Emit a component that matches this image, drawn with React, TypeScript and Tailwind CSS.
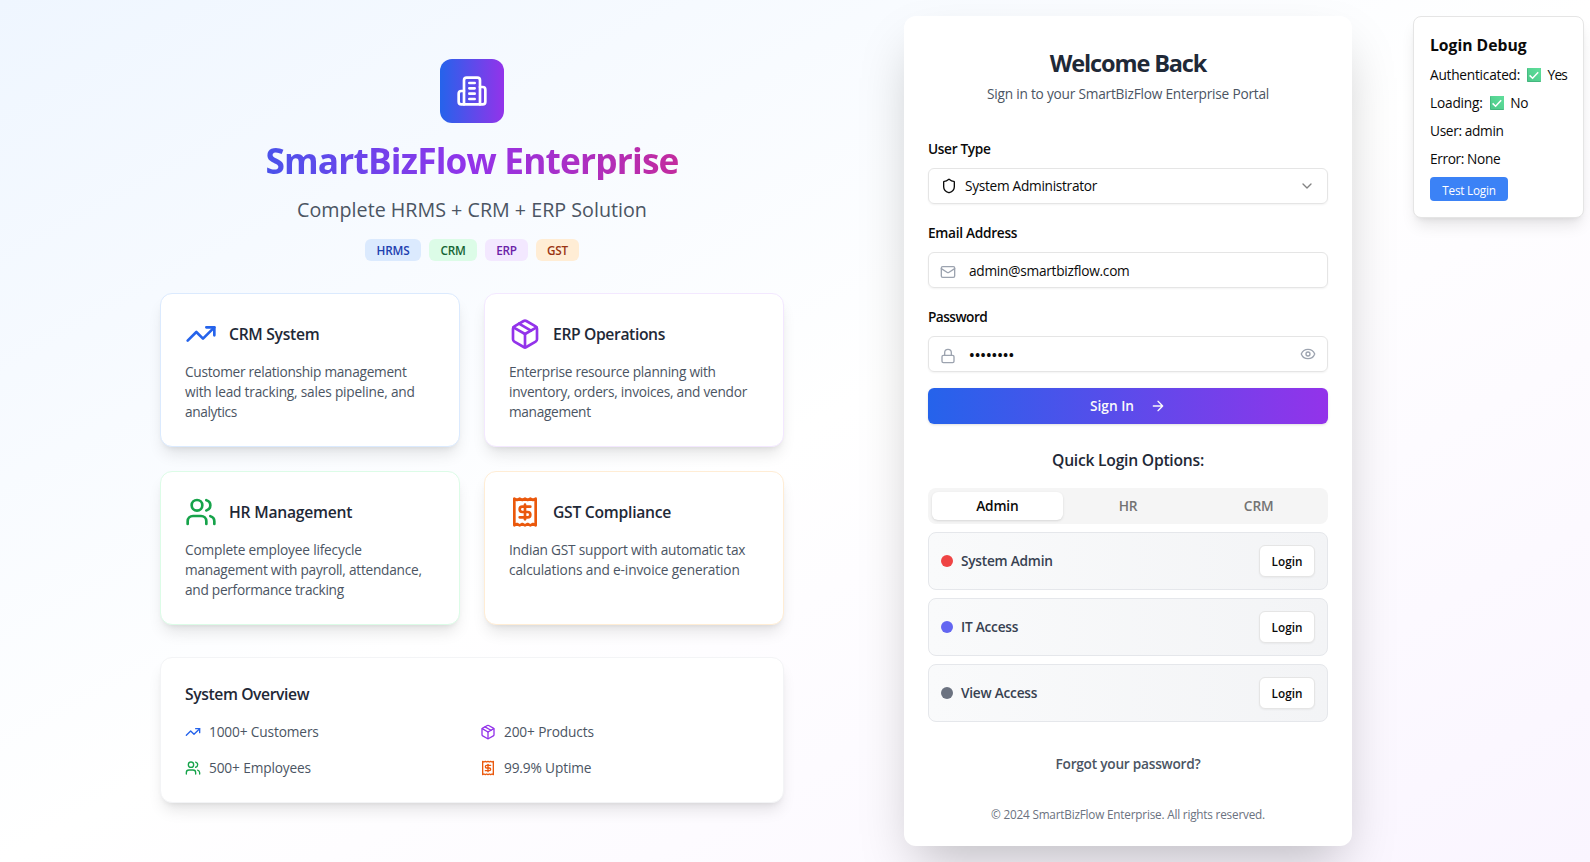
import type { ReactNode } from "react";

type IconProps = { className?: string };

function Icon({ className = "", children }: { className?: string; children: ReactNode }) {
  return (
    <svg
      viewBox="0 0 24 24"
      fill="none"
      stroke="currentColor"
      strokeWidth="2"
      strokeLinecap="round"
      strokeLinejoin="round"
      className={`shrink-0 ${className}`}
    >
      {children}
    </svg>
  );
}

const Building = ({ className }: IconProps) => (
  <Icon className={className}>
    <path d="M6 22V4a2 2 0 0 1 2-2h8a2 2 0 0 1 2 2v18Z" />
    <path d="M6 12H4a2 2 0 0 0-2 2v6a2 2 0 0 0 2 2h2" />
    <path d="M18 9h2a2 2 0 0 1 2 2v9a2 2 0 0 1-2 2h-2" />
    <path d="M10 6h4M10 10h4M10 14h4M10 18h4" />
  </Icon>
);

const Trending = ({ className }: IconProps) => (
  <Icon className={className}>
    <path d="m22 7-8.5 8.5-5-5L2 17" />
    <path d="M16 7h6v6" />
  </Icon>
);

const Package = ({ className }: IconProps) => (
  <Icon className={className}>
    <path d="m7.5 4.27 9 5.15" />
    <path d="M21 8a2 2 0 0 0-1-1.73l-7-4a2 2 0 0 0-2 0l-7 4A2 2 0 0 0 3 8v8a2 2 0 0 0 1 1.73l7 4a2 2 0 0 0 2 0l7-4A2 2 0 0 0 21 16Z" />
    <path d="m3.3 7 8.7 5 8.7-5" />
    <path d="M12 22V12" />
  </Icon>
);

const Users = ({ className }: IconProps) => (
  <Icon className={className}>
    <path d="M16 21v-2a4 4 0 0 0-4-4H6a4 4 0 0 0-4 4v2" />
    <circle cx="9" cy="7" r="4" />
    <path d="M22 21v-2a4 4 0 0 0-3-3.87" />
    <path d="M16 3.13a4 4 0 0 1 0 7.75" />
  </Icon>
);

const Receipt = ({ className }: IconProps) => (
  <Icon className={className}>
    <path d="M4 2v20l2-1 2 1 2-1 2 1 2-1 2 1 2-1 2 1V2l-2 1-2-1-2 1-2-1-2 1-2-1-2 1Z" />
    <path d="M16 8h-6a2 2 0 1 0 0 4h4a2 2 0 1 1 0 4H8" />
    <path d="M12 17.5v-11" />
  </Icon>
);

const Shield = ({ className }: IconProps) => (
  <Icon className={className}>
    <path d="M20 13c0 5-3.5 7.5-7.66 8.95a1 1 0 0 1-.67-.01C7.5 20.5 4 18 4 13V6a1 1 0 0 1 1-1c2 0 4.5-1.2 6.24-2.72a1.17 1.17 0 0 1 1.52 0C14.51 3.81 17 5 19 5a1 1 0 0 1 1 1z" />
  </Icon>
);

const Mail = ({ className }: IconProps) => (
  <Icon className={className}>
    <rect width="20" height="16" x="2" y="4" rx="2" />
    <path d="m22 7-8.97 5.7a1.94 1.94 0 0 1-2.06 0L2 7" />
  </Icon>
);

const Lock = ({ className }: IconProps) => (
  <Icon className={className}>
    <rect width="18" height="11" x="3" y="11" rx="2" />
    <path d="M7 11V7a5 5 0 0 1 10 0v4" />
  </Icon>
);

const Eye = ({ className }: IconProps) => (
  <Icon className={className}>
    <path d="M2.062 12.348a1 1 0 0 1 0-.696 10.75 10.75 0 0 1 19.876 0 1 1 0 0 1 0 .696 10.75 10.75 0 0 1-19.876 0" />
    <circle cx="12" cy="12" r="3" />
  </Icon>
);

const ChevronDown = ({ className }: IconProps) => (
  <Icon className={className}>
    <path d="m6 9 6 6 6-6" />
  </Icon>
);

const ArrowRight = ({ className }: IconProps) => (
  <Icon className={className}>
    <path d="M5 12h14M12 5l7 7-7 7" />
  </Icon>
);

const CheckBadge = () => (
  <svg viewBox="0 0 14 14" className="mr-[6.5px] ml-[7px] inline-block size-[14px] align-[-2px]" role="img" aria-label="check">
    <defs>
      <linearGradient id="checkFill" x1="1" y1="0" x2="0" y2="1">
        <stop offset="0" stopColor="#5fdf9b" />
        <stop offset="1" stopColor="#4dc98a" />
      </linearGradient>
    </defs>
    <rect width="14" height="14" rx="0.8" fill="#3fae79" />
    <rect x="0.6" width="13.4" height="13.2" rx="0.6" fill="url(#checkFill)" />
    <path d="m2.6 7.4 3 2.9 5.6-6" fill="none" stroke="#fff" strokeWidth="1.5" />
  </svg>
);

const badges = [
  { label: "HRMS", className: "w-14 bg-[#dbeafe] text-[#1e40af]" },
  { label: "CRM", className: "w-12 bg-[#dcfce7] text-[#166534]" },
  { label: "ERP", className: "w-[43px] bg-[#f3e8ff] text-[#6b21a8]" },
  { label: "GST", className: "w-[43px] bg-[#ffedd5] text-[#9a3412]" },
];

const features = [
  {
    title: "CRM System",
    titleClass: "tracking-[-0.3px]",
    icon: <Trending className="size-8 text-[#2563eb]" />,
    border: "border-[#dbeafe]",
    lines: [
      { text: "Customer relationship management", className: "tracking-[-0.29px]" },
      { text: "with lead tracking, sales pipeline, and", className: "tracking-[-0.2px]" },
      { text: "analytics", className: "tracking-[-0.38px]" },
    ],
  },
  {
    title: "ERP Operations",
    titleClass: "tracking-[-0.38px]",
    icon: <Package className="size-8 text-[#9333ea]" />,
    border: "border-[#f3e8ff]",
    lines: [
      { text: "Enterprise resource planning with", className: "tracking-[-0.27px]" },
      { text: "inventory, orders, invoices, and vendor", className: "tracking-[-0.25px]" },
      { text: "management", className: "tracking-[-0.33px]" },
    ],
  },
  {
    title: "HR Management",
    titleClass: "tracking-[-0.24px]",
    icon: <Users className="size-8 text-[#16a34a]" />,
    border: "border-[#dcfce7]",
    lines: [
      { text: "Complete employee lifecycle", className: "tracking-[-0.18px]" },
      { text: "management with payroll, attendance,", className: "tracking-[-0.25px]" },
      { text: "and performance tracking", className: "tracking-[-0.28px]" },
    ],
  },
  {
    title: "GST Compliance",
    titleClass: "tracking-[-0.27px]",
    icon: <Receipt className="size-8 text-[#ea580c]" />,
    border: "border-[#ffedd5]",
    lines: [
      { text: "Indian GST support with automatic tax", className: "tracking-[-0.22px]" },
      { text: "calculations and e-invoice generation", className: "tracking-[-0.15px]" },
    ],
  },
];

const stats = [
  { label: "1000+ Customers", icon: <Trending className="size-4 text-[#2563eb]" /> },
  { label: "200+ Products", icon: <Package className="size-4 text-[#9333ea]" /> },
  { label: "500+ Employees", icon: <Users className="size-4 text-[#16a34a]" /> },
  { label: "99.9% Uptime", icon: <Receipt className="size-4 text-[#ea580c]" /> },
];

const quickLogins = [
  { label: "System Admin", dot: "bg-[#ef4444]" },
  { label: "IT Access", dot: "bg-[#6366f1]" },
  { label: "View Access", dot: "bg-[#6b7280]" },
];

function Intro() {
  return (
    <section>
      <div className="flex flex-col items-center">
        <div className="flex size-16 items-center justify-center rounded-xl bg-linear-to-r/srgb from-[#2563eb] to-[#9333ea]">
          <Building className="size-8 text-white" />
        </div>
        <h1 className="mt-[17px] w-full bg-linear-to-r/srgb from-[#2563eb] via-[#9333ea] to-[#db2777] bg-clip-text text-center text-[35.3px] leading-10 font-bold tracking-[-0.84px] whitespace-nowrap text-transparent">
          SmartBizFlow Enterprise
        </h1>
        <p className="mt-4 text-[19.7px] leading-7 text-[#4b5563]">Complete HRMS + CRM + ERP Solution</p>
        <div className="mt-[15px] flex gap-2">
          {badges.map((b) => (
            <span
              key={b.label}
              className={`flex h-[22px] items-center justify-center rounded-md pt-px text-[11.75px] font-semibold tracking-[-0.2px] ${b.className}`}
            >
              {b.label}
            </span>
          ))}
        </div>
      </div>

      <div className="mt-8 grid grid-cols-2 gap-6">
        {features.map((f) => (
          <article key={f.title} className={`h-[154px] rounded-xl border bg-white p-6 shadow-lg ${f.border}`}>
            <div className="flex items-center gap-3">
              {f.icon}
              <h3 className={`text-[15.7px] leading-6 font-semibold text-[#1f2937] ${f.titleClass}`}>{f.title}</h3>
            </div>
            <p className="mt-3 text-[13.7px] leading-5 whitespace-nowrap text-[#4b5563]">
              {f.lines.map((line) => (
                <span key={line.text} className={`block ${line.className}`}>
                  {line.text}
                </span>
              ))}
            </p>
          </article>
        ))}
      </div>

      <div className="mt-8 rounded-xl border border-[#f3f4f6] bg-white p-6 shadow-lg">
        <h3 className="text-[15.7px] leading-6 font-semibold tracking-[-0.4px] text-[#1f2937]">System Overview</h3>
        <div className="mt-4 grid grid-cols-2 gap-4 text-[13.7px] leading-5 tracking-[-0.14px] text-[#4b5563]">
          {stats.map((s) => (
            <div key={s.label} className="flex items-center gap-2">
              {s.icon}
              <span>{s.label}</span>
            </div>
          ))}
        </div>
      </div>
    </section>
  );
}

function LoginCard() {
  return (
    <section className="w-[448px] justify-self-center rounded-xl bg-white px-6 pt-[31px] pb-6 shadow-2xl">
      <header className="text-center">
        <h2 className="text-[23.5px] leading-8 font-bold tracking-[-1.13px] text-[#1f2937]">Welcome Back</h2>
        <p className="mt-[5px] text-[13.7px] leading-5 tracking-[-0.22px] text-[#4b5563]">
          Sign in to your SmartBizFlow Enterprise Portal
        </p>
      </header>

      <div className="mt-[35px] flex flex-col gap-[18px] text-[13.7px] leading-5 text-[#0a0a0a]">
        <div>
          <div className="font-semibold tracking-[-0.36px]">User Type</div>
          <div className="mt-[9px] flex h-9 items-center rounded-md border border-[#e5e5e5] px-3 shadow-xs">
            <Shield className="size-4" />
            <span className="ml-2 flex-1 tracking-[-0.3px]">System Administrator</span>
            <ChevronDown className="size-4 opacity-50" />
          </div>
        </div>
        <div className="pt-px">
          <div className="font-semibold tracking-[-0.3px]">Email Address</div>
          <div className="mt-[9px] flex h-9 items-center rounded-md border border-[#e5e5e5] px-[11px] shadow-xs">
            <Mail className="mt-1 size-4 text-[#9ca3af]" />
            <span className="ml-[13px] flex-1 pt-0.5 tracking-[-0.26px]">admin@smartbizflow.com</span>
          </div>
        </div>
        <div className="pt-px">
          <div className="font-semibold tracking-[-0.55px]">Password</div>
          <div className="mt-[9px] flex h-9 items-center rounded-md border border-[#e5e5e5] px-[11px] shadow-xs">
            <Lock className="mt-1 size-4 text-[#9ca3af]" />
            <span className="ml-[13px] flex-1 text-[15px] font-semibold">••••••••</span>
            <Eye className="size-4 text-[#9ca3af]" />
          </div>
        </div>
      </div>

      <button className="mt-4 flex h-9 w-full items-center justify-center gap-4 rounded-md bg-linear-to-r/srgb from-[#2563eb] to-[#9333ea] text-[13.7px] font-semibold text-[#fafafa] shadow-sm">
        <span>Sign In</span>
        <ArrowRight className="size-4" />
      </button>

      <h3 className="mt-6 text-center text-[15.7px] leading-6 font-semibold tracking-[-0.25px] text-[#1f2937]">
        Quick Login Options:
      </h3>

      <div className="mt-4 grid h-9 grid-cols-3 rounded-lg bg-[#f5f5f5] p-1 text-[13.7px] font-semibold tracking-[-0.15px] text-[#737373]">
        <div className="flex items-center justify-center rounded-md bg-white text-[#0a0a0a] shadow-sm">Admin</div>
        <div className="flex items-center justify-center">HR</div>
        <div className="flex items-center justify-center">CRM</div>
      </div>

      <div className="mt-2 flex flex-col gap-2">
        {quickLogins.map((q) => (
          <div
            key={q.label}
            className="flex h-[58px] items-center rounded-lg border border-[#e5e7eb] bg-linear-to-r/srgb from-[#f9fafb] to-[#f3f4f6] px-3"
          >
            <span className={`size-3 rounded-full ${q.dot}`} />
            <span className="ml-2 flex-1 text-[13.7px] font-semibold tracking-[-0.24px] text-[#374151]">{q.label}</span>
            <button className="h-8 w-14 rounded-md border border-[#e5e5e5] bg-white pt-0.5 text-[11.75px] font-semibold text-[#0a0a0a] shadow-xs">
              Login
            </button>
          </div>
        ))}
      </div>

      <div className="mt-6 flex h-9 items-center justify-center text-[13.7px] font-semibold tracking-[-0.25px] text-[#4b5563]">
        Forgot your password?
      </div>
      <p className="mt-6 text-center text-[11.75px] leading-4 tracking-[-0.2px] text-[#6b7280]">
        © 2024 SmartBizFlow Enterprise. All rights reserved.
      </p>
    </section>
  );
}

function DebugPanel() {
  return (
    <aside className="absolute top-4 right-4 w-[171px] rounded-lg border border-[#e5e5e5] bg-white p-4 text-[13.7px] leading-5 whitespace-nowrap text-[#0a0a0a] shadow-lg">
      <h3 className="text-[15.7px] leading-6 font-bold">Login Debug</h3>
      <div className="mt-2 flex flex-col gap-2">
        <p className="h-5 tracking-[-0.24px]">
          Authenticated:
          <CheckBadge />
          <span className="tracking-[-0.8px]">Yes</span>
        </p>
        <p className="h-5 tracking-[-0.2px]">
          Loading:
          <CheckBadge />
          No
        </p>
        <p className="tracking-[-0.35px]">User: admin</p>
        <p className="tracking-[-0.38px]">Error: None</p>
      </div>
      <button className="mt-2 block h-6 w-[78px] rounded bg-[#3b82f6] pt-px text-[11.75px] tracking-[-0.23px] text-white">
        Test Login
      </button>
    </aside>
  );
}

export default function App() {
  return (
    <div className="h-[862px] w-full overflow-hidden">
      <main className="relative flex h-[862px] w-[1600px] items-center justify-center bg-linear-to-br/srgb from-[#eff6ff] via-white to-[#faf5ff] font-['Open_Sans','Noto_Sans',sans-serif]">
        <div className="grid w-[1280px] grid-cols-2 items-center gap-8">
          <Intro />
          <LoginCard />
        </div>
        <DebugPanel />
      </main>
    </div>
  );
}
